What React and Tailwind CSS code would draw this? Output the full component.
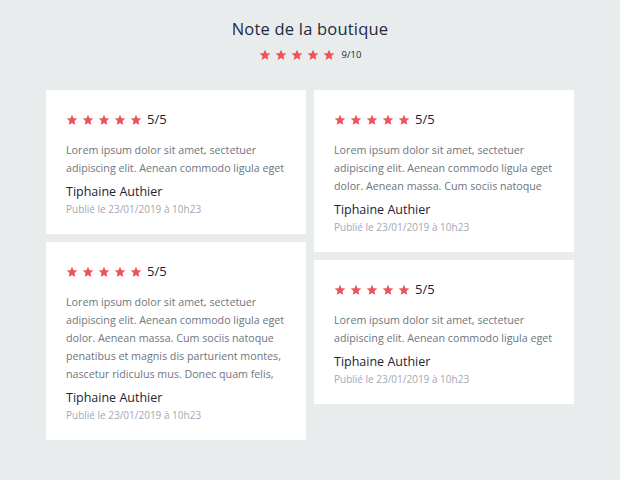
import React from 'react';

const LINES = [
  'Lorem ipsum dolor sit amet, sectetuer',
  'adipiscing elit. Aenean commodo ligula eget',
  'dolor. Aenean massa. Cum sociis natoque',
  'penatibus et magnis dis parturient montes,',
  'nascetur ridiculus mus. Donec quam felis,',
];

function Star() {
  return (
    <svg width="12" height="12" viewBox="0 0 24 24" className="shrink-0">
      <path
        fill="#eb5558"
        d="M12 1.5l3.1 7 7.6.7-5.8 5 1.8 7.5L12 17.8l-6.7 3.9 1.8-7.5-5.8-5 7.6-.7z"
      />
    </svg>
  );
}

function Stars() {
  return (
    <div className="flex items-center gap-1">
      {[0, 1, 2, 3, 4].map((i) => (
        <Star key={i} />
      ))}
    </div>
  );
}

function ReviewCard({ lines }) {
  return (
    <div className="bg-white px-5 pt-[22px] pb-[18px]">
      <div className="flex items-center gap-1 h-4">
        <Stars />
        <span className="text-[13px] text-[#1d2433] ml-[1px]">5/5</span>
      </div>
      <div className="mt-[13px] text-[10.7px] leading-[18px] text-[#6e7580]">
        {LINES.slice(0, lines).map((l) => (
          <div key={l} className="whitespace-nowrap">{l}</div>
        ))}
      </div>
      <div className="mt-[6px] text-[12.5px] leading-[18px] text-[#1d2433]">Tiphaine Authier</div>
      <div className="mt-[1px] text-[10px] leading-[14px] text-[#a2a8b2]">Publié le 23/01/2019 à 10h23</div>
    </div>
  );
}

export default function App() {
  return (
    <div
      className="min-h-screen bg-[#e8ecec] pt-[18px]"
      style={{ fontFamily: '"Open Sans", sans-serif' }}
    >
      <h1 className="text-center text-[16.5px] leading-[22px] font-medium text-[#1e2a3c] tracking-[0.2px]">
        Note de la boutique
      </h1>
      <div className="flex items-center justify-center gap-[5px] mt-[9px] h-3">
        <Stars />
        <span className="text-[9.5px] text-[#1d2433] ml-[2px]">9/10</span>
      </div>
      <div className="flex justify-center gap-2 mt-[29px]">
        <div className="flex flex-col gap-2 w-[260px]">
          <ReviewCard lines={2} />
          <ReviewCard lines={5} />
        </div>
        <div className="flex flex-col gap-2 w-[260px]">
          <ReviewCard lines={3} />
          <ReviewCard lines={2} />
        </div>
      </div>
    </div>
  );
}
